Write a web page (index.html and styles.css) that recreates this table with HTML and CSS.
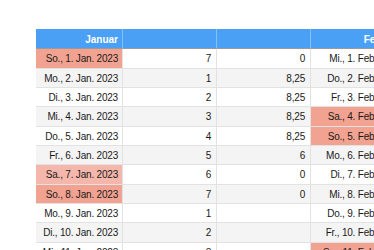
FILE: index.html
```html
<!DOCTYPE html>
<html lang="de">
<head>
<meta charset="utf-8">
<link rel="stylesheet" href="styles.css">
</head>
<body>
<div class="viewport">
  <div class="sheet">
    <div class="row head">
      <div class="cell date">Januar</div>
      <div class="cell num"></div>
      <div class="cell num"></div>
      <div class="cell date feb">Februar</div>
    </div>
    <div class="row">
      <div class="cell date sun">So., 1. Jan. 2023</div>
      <div class="cell num">7</div>
      <div class="cell num">0</div>
      <div class="cell date feb">Mi., 1. Feb. 2023</div>
    </div>
    <div class="row alt">
      <div class="cell date">Mo., 2. Jan. 2023</div>
      <div class="cell num">1</div>
      <div class="cell num">8,25</div>
      <div class="cell date feb">Do., 2. Feb. 2023</div>
    </div>
    <div class="row">
      <div class="cell date">Di., 3. Jan. 2023</div>
      <div class="cell num">2</div>
      <div class="cell num">8,25</div>
      <div class="cell date feb">Fr., 3. Feb. 2023</div>
    </div>
    <div class="row alt">
      <div class="cell date">Mi., 4. Jan. 2023</div>
      <div class="cell num">3</div>
      <div class="cell num">8,25</div>
      <div class="cell date feb sun">Sa., 4. Feb. 2023</div>
    </div>
    <div class="row">
      <div class="cell date">Do., 5. Jan. 2023</div>
      <div class="cell num">4</div>
      <div class="cell num">8,25</div>
      <div class="cell date feb sun">So., 5. Feb. 2023</div>
    </div>
    <div class="row alt">
      <div class="cell date">Fr., 6. Jan. 2023</div>
      <div class="cell num">5</div>
      <div class="cell num">6</div>
      <div class="cell date feb">Mo., 6. Feb. 2023</div>
    </div>
    <div class="row">
      <div class="cell date sat">Sa., 7. Jan. 2023</div>
      <div class="cell num">6</div>
      <div class="cell num">0</div>
      <div class="cell date feb">Di., 7. Feb. 2023</div>
    </div>
    <div class="row alt">
      <div class="cell date sun">So., 8. Jan. 2023</div>
      <div class="cell num">7</div>
      <div class="cell num">0</div>
      <div class="cell date feb">Mi., 8. Feb. 2023</div>
    </div>
    <div class="row">
      <div class="cell date">Mo., 9. Jan. 2023</div>
      <div class="cell num">1</div>
      <div class="cell num"></div>
      <div class="cell date feb">Do., 9. Feb. 2023</div>
    </div>
    <div class="row alt">
      <div class="cell date">Di., 10. Jan. 2023</div>
      <div class="cell num">2</div>
      <div class="cell num"></div>
      <div class="cell date feb">Fr., 10. Feb. 2023</div>
    </div>
    <div class="row">
      <div class="cell date">Mi., 11. Jan. 2023</div>
      <div class="cell num">3</div>
      <div class="cell num"></div>
      <div class="cell date feb sun">Sa., 11. Feb. 2023</div>
    </div>
  </div>
</div>
</body>
</html>
```
FILE: styles.css
```css
html, body {
  margin: 0;
  padding: 0;
  background: #ffffff;
}
.viewport {
  width: 374px;
  height: 250px;
  overflow: hidden;
  padding: 29px 0 0 36px;
  box-sizing: border-box;
}
.sheet {
  width: 420px;
  font-family: "Liberation Sans", Arial, Helvetica, sans-serif;
  font-size: 10px;
  letter-spacing: -0.2px;
  color: #1a1a1a;
}
.row {
  display: grid;
  grid-template-columns: 87px 94px 94px 95px;
  height: 19.33px;
  background: #ffffff;
}
.row.alt {
  background: #f4f4f4;
}
.cell {
  box-sizing: border-box;
  border-right: 1px solid #e2e2e2;
  border-bottom: 1px solid #e2e2e2;
  padding: 1px 4px 0 4px;
  display: flex;
  align-items: center;
  justify-content: flex-end;
  white-space: nowrap;
  overflow: hidden;
}
.cell.num {
  padding-right: 5px;
}
.row.head {
  height: 20.33px;
  background: #4aa0f5;
}
.row.head .cell {
  color: #ffffff;
  font-weight: bold;
  letter-spacing: 0;
  border-right-color: #86bff8;
  border-bottom-color: #9a9a9a;
}
.cell.sun {
  background: #f2a290;
}
.cell.sat {
  background: #f5b7ac;
}
```
